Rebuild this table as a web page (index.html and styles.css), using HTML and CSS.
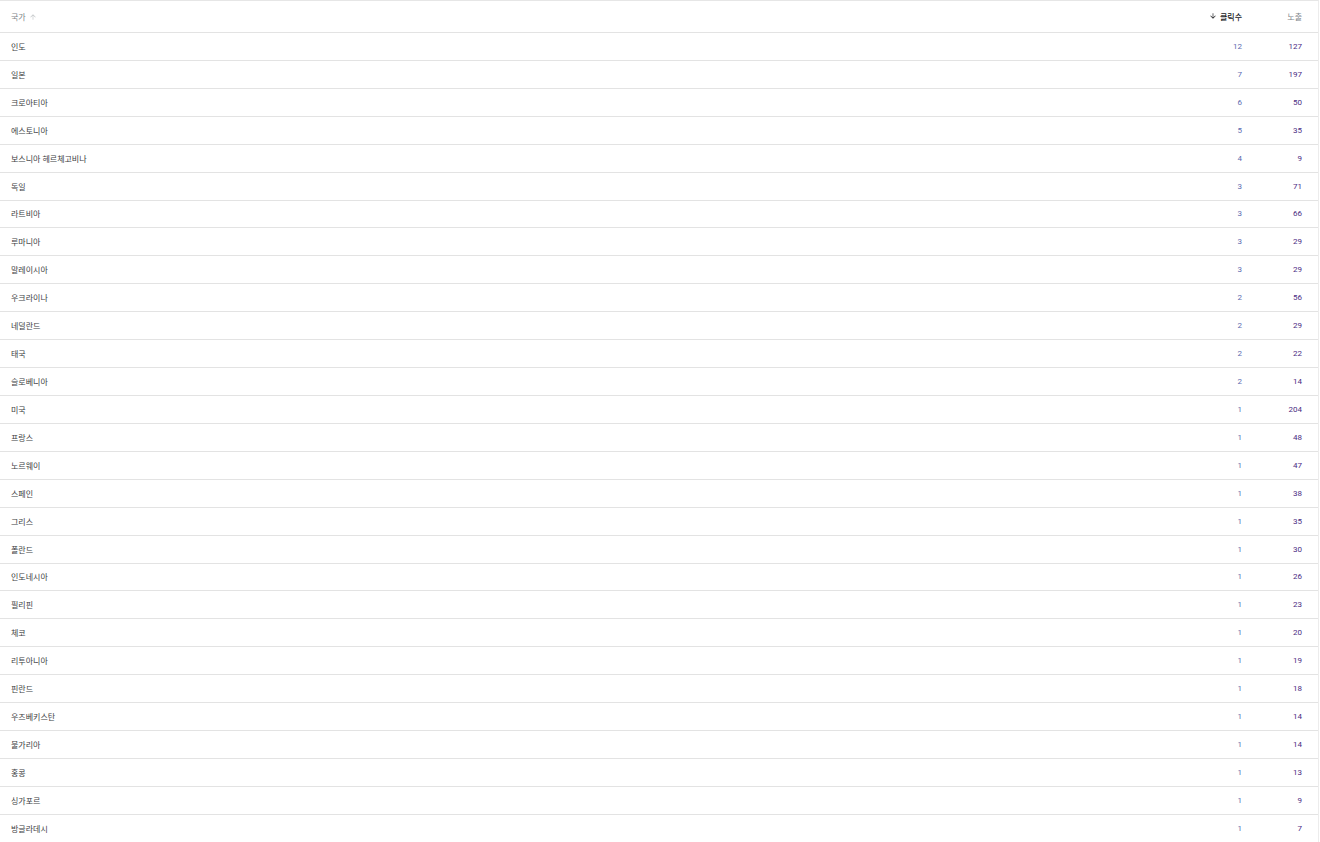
FILE: index.html
```html
<!DOCTYPE html>
<html>
  <head>
    <title>국가별 실적</title>
    <link rel="stylesheet" href="styles.css">
  </head>
  <body>
    <div class="table-card">
      <table id="data-table">
        <thead>
          <tr>
            <th class="col-country">
              <span class="th-label">국가
                <svg class="sort-icon faint" viewBox="0 0 24 24"><path d="M4 12l1.41 1.41L11 7.83V20h2V7.83l5.58 5.59L20 12l-8-8-8 8z"/></svg>
              </span>
            </th>
            <th class="col-num active">
              <span class="th-label">
                <svg class="sort-icon" viewBox="0 0 24 24"><path d="M20 12l-1.41-1.41L13 16.17V4h-2v12.17l-5.58-5.59L4 12l8 8 8-8z"/></svg>
                클릭수
              </span>
            </th>
            <th class="col-num col-last">노출</th>
          </tr>
        </thead>
        <tbody id="table-body"></tbody>
      </table>
    </div>

    <script>
    const rows = [
      ["인도", 12, 127],
      ["일본", 7, 197],
      ["크로아티아", 6, 50],
      ["에스토니아", 5, 35],
      ["보스니아 헤르체고비나", 4, 9],
      ["독일", 3, 71],
      ["라트비아", 3, 66],
      ["루마니아", 3, 29],
      ["말레이시아", 3, 29],
      ["우크라이나", 2, 56],
      ["네덜란드", 2, 29],
      ["태국", 2, 22],
      ["슬로베니아", 2, 14],
      ["미국", 1, 204],
      ["프랑스", 1, 48],
      ["노르웨이", 1, 47],
      ["스페인", 1, 38],
      ["그리스", 1, 35],
      ["폴란드", 1, 30],
      ["인도네시아", 1, 26],
      ["필리핀", 1, 23],
      ["체코", 1, 20],
      ["리투아니아", 1, 19],
      ["핀란드", 1, 18],
      ["우즈베키스탄", 1, 14],
      ["불가리아", 1, 14],
      ["홍콩", 1, 13],
      ["싱가포르", 1, 9],
      ["방글라데시", 1, 7],
    ];

    const tbody = document.getElementById("table-body");
    rows.forEach(([country, clicks, impressions]) => {
      const tr = document.createElement("tr");
      tr.innerHTML =
        `<td class="col-country">${country}</td>` +
        `<td class="col-num clicks">${clicks}</td>` +
        `<td class="col-num col-last impressions">${impressions}</td>`;
      tbody.appendChild(tr);
    });
    </script>
  </body>
</html>
```

FILE: styles.css
```css
body {
  margin: 0;
  background-color: #fff;
  font-family: Roboto, "Noto Sans CJK KR", sans-serif;
  color: #202124;
}

.table-card {
  width: 1318px;
  border-right: 1px solid #ececec;
  border-top: 1px solid #e6e6e6;
}

table {
  border-collapse: collapse;
  width: 100%;
}

th,
td {
  padding: 0;
  font-size: 8px;
  text-align: left;
  border-bottom: 1px solid #e3e3e3;
}

th {
  height: 31px;
  font-weight: 400;
  color: #80868b;
}

td {
  height: 26.93px;
  color: #3c4043;
}

.col-country {
  padding-left: 11px;
}

.col-num {
  text-align: right;
  width: 80px;
}

.col-last {
  width: 60px;
  padding-right: 16px;
}

th.active {
  color: #202124;
  font-weight: 500;
}

.th-label {
  display: inline-flex;
  align-items: center;
  gap: 3px;
}

.sort-icon {
  width: 8px;
  height: 8px;
  fill: #202124;
}

.sort-icon.faint {
  fill: #c4c7c9;
}

.clicks {
  color: #5c6bb0;
}

.impressions {
  color: #4b2c83;
}
```
